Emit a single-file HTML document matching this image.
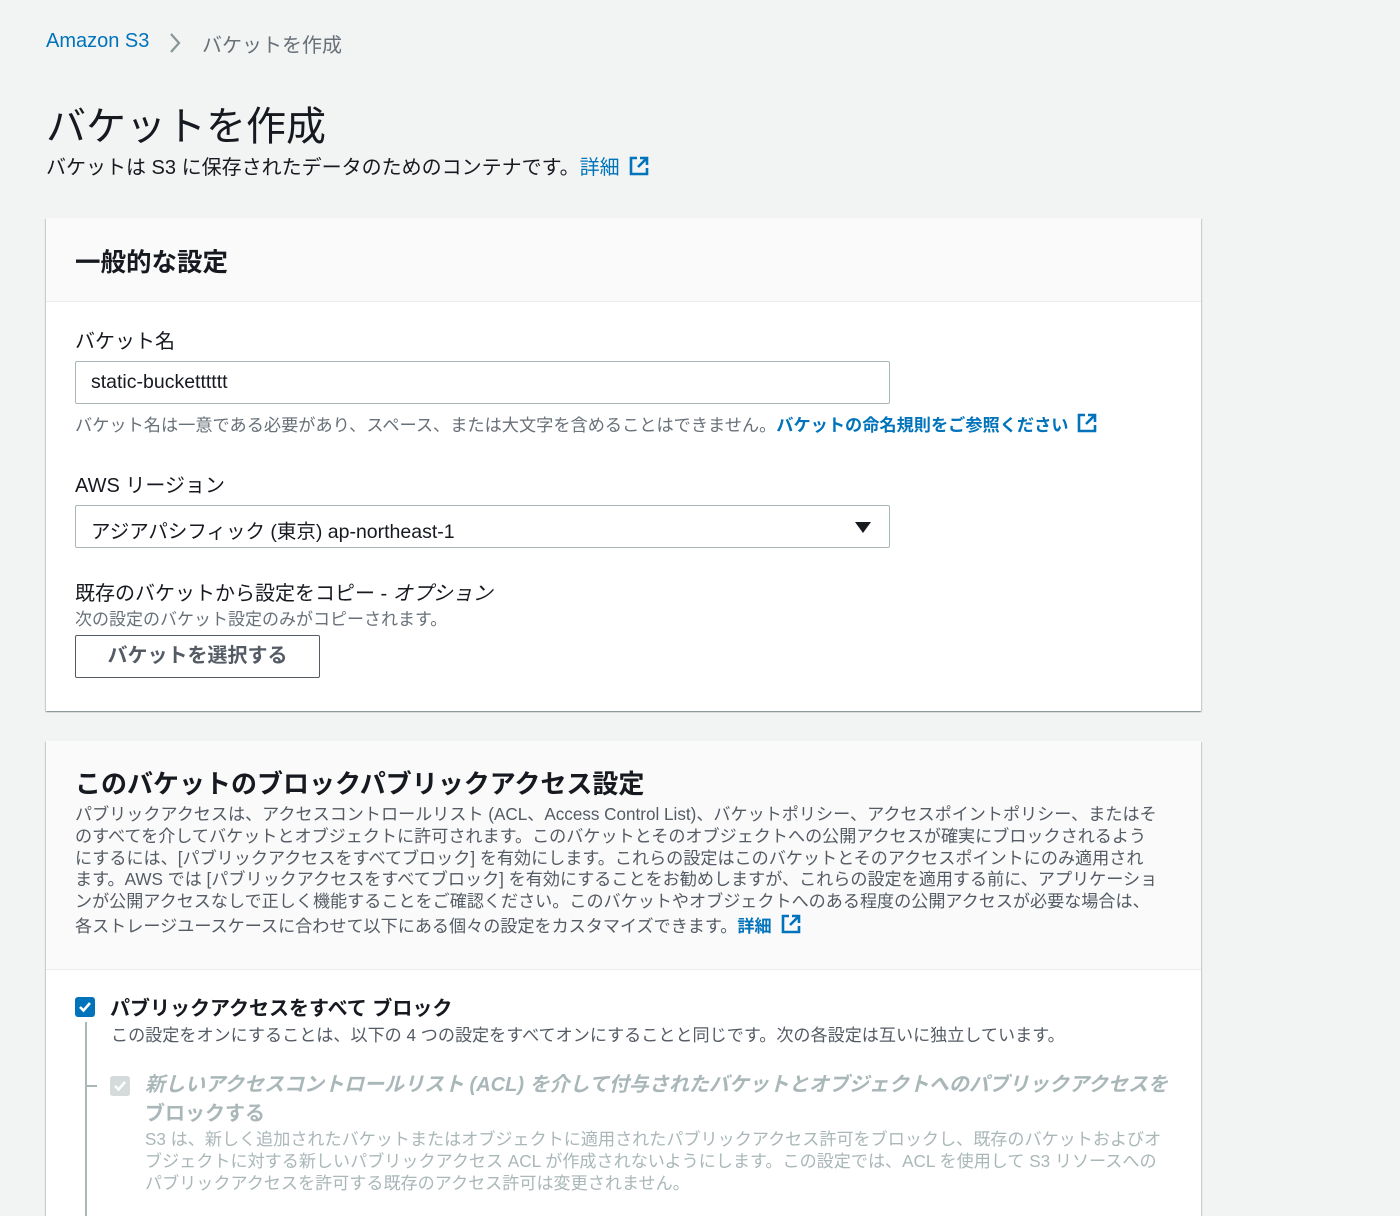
<!DOCTYPE html>
<html><head><meta charset="utf-8"><style>
*{box-sizing:border-box;margin:0;padding:0}
html,body{width:1400px;height:1216px;overflow:hidden}
body{background:#f2f3f3;font-family:"Liberation Sans","Noto Sans CJK JP",sans-serif;color:#16191f;position:relative}
.a{position:absolute;white-space:nowrap}
.blue{color:#0073bb}
.card{position:absolute;left:46px;width:1155px;background:#fff;box-shadow:0 1px 1px rgba(0,28,36,.3),1px 1px 1px rgba(0,28,36,.15),-1px 1px 1px rgba(0,28,36,.15)}
.hd{background:#fafafa;border-bottom:1px solid #eaeded}
.ext{display:inline-block;vertical-align:-3px;margin-left:8px}
.input{position:absolute;left:75px;width:815px;height:43px;border:1px solid #aab7b8;border-radius:2px;background:#fff;font-size:19.5px;padding:9px 15px}
.g{color:#687078}
.d{color:#aab7b8}
</style></head><body>
<div class="a blue" style="left:46px;top:30px;font-size:20px">Amazon S3</div>
<svg class="a" style="left:168px;top:32px" width="14" height="22" viewBox="0 0 14 22"><path d="M3 2l8 9-8 9" fill="none" stroke="#879596" stroke-width="2.2"/></svg>
<div class="a g" style="left:202px;top:29px;font-size:20px">バケットを作成</div>
<div class="a" style="left:46px;top:94px;font-size:40px;font-weight:400">バケットを作成</div>
<div class="a" style="left:46px;top:151px;font-size:20px">バケットは S3 に保存されたデータのためのコンテナです。<span class="blue">詳細<svg class="ext" width="22" height="22" viewBox="0 0 22 22"><path d="M9 3H3v16h16v-6M12 3h7v7M19 3l-9 9" fill="none" stroke="#0073bb" stroke-width="2.6"/></svg></span></div>

<div class="card" style="top:218px;height:493px">
 <div class="hd" style="height:84px"></div>
</div>
<div class="a" style="left:75px;top:242px;font-size:25.5px;font-weight:700">一般的な設定</div>
<div class="a" style="left:75px;top:325px;font-size:20px">バケット名</div>
<div class="input" style="top:361px">static-bucketttttt</div>
<div class="a g" style="left:75px;top:411px;font-size:17.2px">バケット名は一意である必要があり、スペース、または大文字を含めることはできません。<b class="blue">バケットの命名規則をご参照ください</b><svg class="ext" width="22" height="22" viewBox="0 0 22 22"><path d="M9 3H3v16h16v-6M12 3h7v7M19 3l-9 9" fill="none" stroke="#0073bb" stroke-width="2.6"/></svg></div>
<div class="a" style="left:75px;top:469px;font-size:20px">AWS リージョン</div>
<div class="input" style="top:505px">アジアパシフィック (東京) ap-northeast-1<svg class="a" style="right:18px;top:16px" width="16" height="11" viewBox="0 0 16 11"><path d="M0 0h16L8 11z" fill="#16191f"/></svg></div>
<div class="a" style="left:75px;top:577px;font-size:20px">既存のバケットから設定をコピー - <i>オプション</i></div>
<div class="a g" style="left:75px;top:605px;font-size:17px">次の設定のバケット設定のみがコピーされます。</div>
<div class="a" style="left:75px;top:635px;width:245px;height:43px;border:1px solid #545b64;border-radius:2px;background:#fff;font-size:20px;font-weight:700;color:#545b64;text-align:center;line-height:41px">バケットを選択する</div>

<div class="card" style="top:741px;height:500px">
 <div class="hd" style="height:229px"></div>
</div>
<div class="a" style="left:75px;top:764px;font-size:26px;font-weight:700">このバケットのブロックパブリックアクセス設定</div>
<div class="a g" style="left:75px;top:804px;font-size:17.1px;line-height:21.8px;color:#545b64">パブリックアクセスは、アクセスコントロールリスト (ACL、Access Control List)、バケットポリシー、アクセスポイントポリシー、またはそ<br>のすべてを介してバケットとオブジェクトに許可されます。このバケットとそのオブジェクトへの公開アクセスが確実にブロックされるよう<br>にするには、[パブリックアクセスをすべてブロック] を有効にします。これらの設定はこのバケットとそのアクセスポイントにのみ適用され<br>ます。AWS では [パブリックアクセスをすべてブロック] を有効にすることをお勧めしますが、これらの設定を適用する前に、アプリケーショ<br>ンが公開アクセスなしで正しく機能することをご確認ください。このバケットやオブジェクトへのある程度の公開アクセスが必要な場合は、<br>各ストレージユースケースに合わせて以下にある個々の設定をカスタマイズできます。<b class="blue">詳細</b><svg class="ext" width="22" height="22" viewBox="0 0 22 22"><path d="M9 3H3v16h16v-6M12 3h7v7M19 3l-9 9" fill="none" stroke="#0073bb" stroke-width="2.6"/></svg></div>

<div class="a" style="left:75px;top:997px;width:20px;height:20px;background:#0073bb;border-radius:3px"><svg width="20" height="20" viewBox="0 0 20 20"><path d="M5 10l3.5 3.5L15 6" fill="none" stroke="#fff" stroke-width="2.6"/></svg></div>
<div class="a" style="left:110px;top:992px;font-size:20px;font-weight:700">パブリックアクセスをすべて ブロック</div>
<div class="a g" style="left:111px;top:1021px;font-size:17.1px;color:#545b64">この設定をオンにすることは、以下の 4 つの設定をすべてオンにすることと同じです。次の各設定は互いに独立しています。</div>
<div class="a" style="left:85px;top:1022px;width:2px;height:200px;background:#aab7b8"></div>
<div class="a" style="left:85px;top:1085px;width:12px;height:2px;background:#aab7b8"></div>
<div class="a" style="left:110px;top:1076px;width:20px;height:20px;background:#d5dbdb;border-radius:3px"><svg width="20" height="20" viewBox="0 0 20 20"><path d="M5 10l3.5 3.5L15 6" fill="none" stroke="#fff" stroke-width="2.6"/></svg></div>
<div class="a d" style="left:145px;top:1071px;font-size:20px;font-weight:700;line-height:29px;font-style:italic">新しいアクセスコントロールリスト (ACL) を介して付与されたバケットとオブジェクトへのパブリックアクセスを<br><span style="font-style:normal">ブロックする</span></div>
<div class="a d" style="left:145px;top:1129px;font-size:17.1px;line-height:21.8px">S3 は、新しく追加されたバケットまたはオブジェクトに適用されたパブリックアクセス許可をブロックし、既存のバケットおよびオ<br>ブジェクトに対する新しいパブリックアクセス ACL が作成されないようにします。この設定では、ACL を使用して S3 リソースへの<br>パブリックアクセスを許可する既存のアクセス許可は変更されません。</div>
</body></html>
